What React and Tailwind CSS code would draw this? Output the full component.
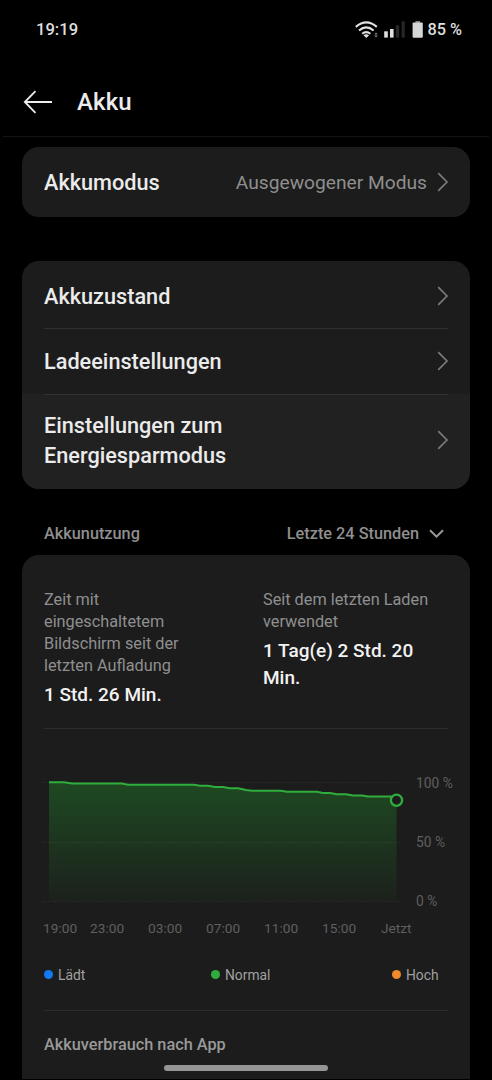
const menuItems = [
  { label: "Akkuzustand", style: "h-[68px] pt-0.5" },
  { label: "Ladeeinstellungen", style: "h-[66px] pb-0.5" },
  {
    label: "Einstellungen zum Energiesparmodus",
    style: "h-[95px] -mt-px bg-[#212121] pb-[3px]",
  },
];

const hours = ["23:00", "03:00", "07:00", "11:00", "15:00"];

const linePoints =
  "9,12.3 24,12.3 32,13.5 82,13.5 88,14.8 154,14.8 160,15.8 168,15.8 175,17 183,17 190,18.3 198,18.3 206,20 212,20.7 241,20.7 247,21.8 277,21.8 283,23 290,23 297,24.2 306,24.2 313,25.4 322,25.4 328,26.6 351,26.6 356.5,29";

function ChevronRight() {
  return (
    <svg width="12" height="20" viewBox="0 0 12 20" fill="none" className="shrink-0">
      <path d="M1.2 1.2L10 10L1.2 18.8" stroke="#7a7a7a" strokeWidth="1.7" />
    </svg>
  );
}

function StatusBar() {
  return (
    <div className="flex h-[60px] items-center justify-between pl-9 pr-[30px]">
      <span className="text-[16.6px] font-medium text-[#dedede]">19:19</span>
      <div className="flex items-center">
        <svg width="68" height="20" viewBox="356 20 68 20" fill="none">
          {/* wifi */}
          <g stroke="#e2e2e2" strokeWidth="2.1">
            <path d="M356.8 26.9Q367.3 17.9 377.8 26.9" />
            <path d="M360 30.5Q367.3 24.2 374.6 30.5" />
            <path d="M363.2 33.8Q367.3 30.4 371.4 33.8" />
          </g>
          <path d="M364.5 35.3Q367.3 33 370.1 35.3L367.3 38Z" fill="#e2e2e2" />
          <path d="M375.3 34.6L377 32.4L378.7 34.6ZM375.3 35.6H378.7L377 37.6Z" fill="#8a8a8a" />
          {/* signal */}
          <rect x="385.2" y="31.3" width="3.6" height="6.3" fill="#dedede" />
          <rect x="391" y="29" width="3.6" height="8.6" fill="#dedede" />
          <rect x="396.9" y="25.2" width="3.2" height="12.4" fill="#262626" />
          <rect x="402.6" y="21.3" width="3.2" height="16.3" fill="#262626" />
          {/* battery */}
          <rect x="416.5" y="21" width="4.6" height="3" fill="#858585" />
          <rect x="413.6" y="22.4" width="10.2" height="15.4" rx="1.2" fill="#d6d6d6" />
        </svg>
        <span className="ml-1 pt-px text-[16.3px] font-medium text-[#dedede]">85 %</span>
      </div>
    </div>
  );
}

function Header() {
  return (
    <div className="mx-[3px] flex h-[77px] items-center border-b border-[#141414] pl-5 pt-2">
      <svg width="29" height="24" viewBox="0 0 29 24" fill="none">
        <path d="M12.5 1.2L1.8 12L12.5 22.8M1.8 12H29" stroke="#ededed" strokeWidth="1.8" />
      </svg>
      <h1 className="ml-[25px] text-[24px] font-medium tracking-[0.1px] text-[#ebebeb]">Akku</h1>
    </div>
  );
}

function BatteryChart() {
  return (
    <div className="mt-[41px]">
      <div className="flex">
        <svg width="364" height="135" viewBox="0 0 364 135" fill="none" className="-ml-1 shrink-0">
          <defs>
            <linearGradient id="batteryFill" x1="0" y1="12" x2="0" y2="131" gradientUnits="userSpaceOnUse">
              <stop offset="0" stopColor="#1e4922" />
              <stop offset="1" stopColor="#1c211c" />
            </linearGradient>
          </defs>
          <polygon points={`9,131 ${linePoints} 356.5,131`} fill="url(#batteryFill)" />
          <g stroke="#ffffff" strokeOpacity="0.055" strokeDasharray="2 1">
            <path d="M2 12.5H361M2 72.5H361M2 131.5H361" />
          </g>
          <polyline points={linePoints} stroke="#2fae3d" strokeWidth="2" />
          <circle cx="356.5" cy="30.2" r="5.6" fill="#1c1c1c" stroke="#2fae3d" strokeWidth="2.3" />
        </svg>
        <div className="ml-3 flex flex-col gap-[39px] whitespace-nowrap pt-[3px] text-[13.8px] leading-5 text-[#5f5f5f]">
          <span>100 %</span>
          <span>50 %</span>
          <span>0 %</span>
        </div>
      </div>
      <div className="-ml-px mt-[7px] flex text-[13.7px] leading-5 text-[#5f5f5f]">
        <span className="w-[47px]">19:00</span>
        {hours.map((hour) => (
          <span key={hour} className="w-[58px]">{hour}</span>
        ))}
        <span className="ml-px">Jetzt</span>
      </div>
    </div>
  );
}

function Legend({ color, label }) {
  return (
    <div className="flex items-center gap-[5px]">
      <span className={`size-[9px] rounded-full ${color}`} />
      <span className="pt-px text-[13.8px] leading-5 text-[#a0a0a0]">{label}</span>
    </div>
  );
}

export default function App() {
  return (
    <div className="relative h-[1080px] w-[492px] overflow-hidden bg-black font-['Roboto',sans-serif]">
      <StatusBar />
      <Header />

      <main className="px-[22px] pt-[10px]">
        {/* Mode */}
        <div className="flex h-[70px] items-center rounded-[17px] bg-[#1c1c1c] pl-[22px] pr-[21px]">
          <span className="pt-0.5 text-[21.7px] font-medium text-[#ebebeb]">Akkumodus</span>
          <span className="ml-auto mr-[10px] pt-0.5 text-[19.2px] text-[#8f8f8f]">Ausgewogener Modus</span>
          <ChevronRight />
        </div>

        {/* Settings */}
        <div className="mt-11 overflow-hidden rounded-[17px] bg-[#1c1c1c]">
          {menuItems.map((item, i) => (
            <div key={item.label}>
              {i > 0 && <div className="relative -mt-px mx-[22px] h-px bg-[#303030]" />}
              <div className={`flex items-center justify-between pl-[22px] pr-[21px] ${item.style}`}>
                <span className="w-[200px] pt-0.5 text-[21.7px] font-medium leading-[30px] text-[#ebebeb]">
                  {item.label}
                </span>
                <ChevronRight />
              </div>
            </div>
          ))}
        </div>

        <div className="flex h-[66px] items-center justify-between pl-[22px] pr-[26px] pt-[23px] text-[16.3px] font-medium text-[#8f8f8f]">
          <span className="pt-0.5">Akkunutzung</span>
          <div className="flex items-center gap-2.5">
            <span className="pt-0.5">Letzte 24 Stunden</span>
            <svg width="15" height="10" viewBox="0 0 15 10" fill="none">
              <path d="M1 1.2L7.5 7.7L14 1.2" stroke="#999999" strokeWidth="2" />
            </svg>
          </div>
        </div>

        {/* Usage */}
        <div className="h-[524px] rounded-t-[17px] bg-[#1c1c1c] px-[22px] pt-[34px]">
          <div className="flex h-[139px]">
            <div className="w-[219px]">
              <p className="w-[150px] text-[16.3px] leading-[22px] text-[#8f8f8f]">
                Zeit mit eingeschaltetem Bildschirm seit der letzten Aufladung
              </p>
              <p className="mt-1 text-[19px] font-medium leading-[27px] text-[#f2f2f2]">1 Std. 26 Min.</p>
            </div>
            <div className="w-[185px]">
              <p className="text-[16.3px] leading-[22px] text-[#8f8f8f]">Seit dem letzten Laden verwendet</p>
              <p className="mt-1 w-[170px] text-[19px] font-medium leading-[27px] text-[#f2f2f2]">
                1 Tag(e) 2 Std. 20 Min.
              </p>
            </div>
          </div>
          <div className="h-px bg-[#2c2c2c]" />

          <BatteryChart />

          <div className="mt-[26px] grid grid-cols-[167px_181px_auto]">
            <Legend color="bg-[#1478f0]" label="Lädt" />
            <Legend color="bg-[#2fae3d]" label="Normal" />
            <Legend color="bg-[#f08a2c]" label="Hoch" />
          </div>

          <div className="mt-[25px] h-px bg-[#2c2c2c]" />
          <p className="mt-[22px] text-[16.3px] font-medium text-[#999999]">Akkuverbrauch nach App</p>
        </div>
      </main>

      {/* Gesture bar over the scrolling content */}
      <div className="absolute bottom-[9px] left-[164px] h-[6px] w-[164px] rounded-full bg-[#959595]" />
    </div>
  );
}
